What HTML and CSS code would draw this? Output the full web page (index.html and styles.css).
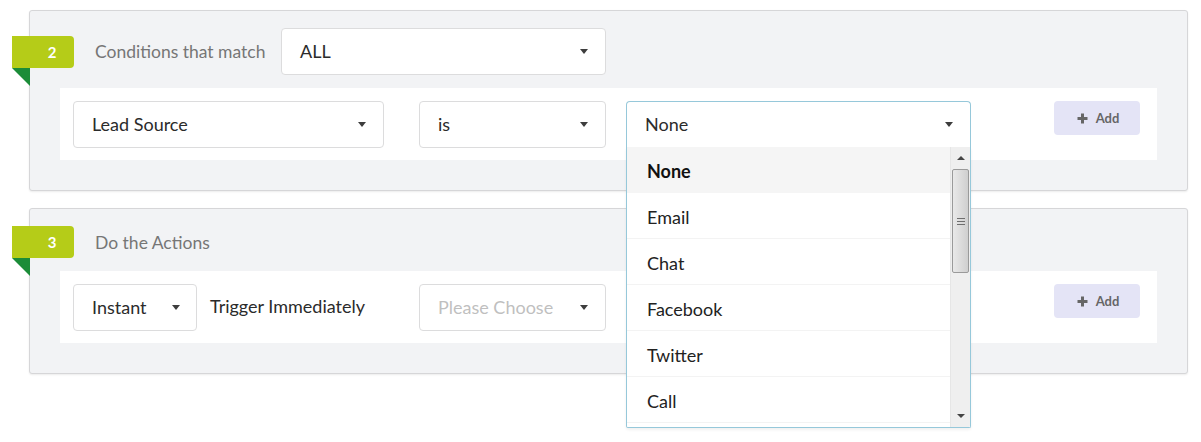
FILE: index.html
```html
<!DOCTYPE html>
<html lang="en">
<head>
<meta charset="utf-8">
<title>Workflow rule</title>
<link rel="stylesheet" href="styles.css">
</head>
<body>
<div class="page">
  <section class="card">
    <div class="card-head">
      <span class="step">2</span>
      <span class="head-label">Conditions that match</span>
      <div class="select select--match"><span class="select-text">ALL</span><span class="caret"></span></div>
    </div>
    <div class="rule-row">
      <div class="cell"><div class="select select--field"><span class="select-text">Lead Source</span><span class="caret"></span></div></div>
      <div class="cell"><div class="select select--op"><span class="select-text">is</span><span class="caret"></span></div></div>
      <div class="cell">
        <div class="select select--value is-open">
          <span class="select-text">None</span><span class="caret"></span>
          <div class="menu">
            <ul class="menu-list">
              <li class="menu-item is-selected">None</li>
              <li class="menu-item">Email</li>
              <li class="menu-item">Chat</li>
              <li class="menu-item">Facebook</li>
              <li class="menu-item">Twitter</li>
              <li class="menu-item">Call</li>
            </ul>
            <div class="scrollbar">
              <div class="sb-btn"><span class="sb-up"></span></div>
              <div class="sb-thumb"><span class="grip"></span><span class="grip"></span><span class="grip"></span></div>
              <div class="sb-track"></div>
              <div class="sb-btn"><span class="sb-down"></span></div>
            </div>
          </div>
        </div>
      </div>
      <div class="cell cell--end">
        <button class="add-btn" type="button"><svg class="plus" width="11" height="11" viewBox="0 0 11 11"><path d="M5.5 0.5v10M0.5 5.5h10" stroke="#666666" stroke-width="3"/></svg>Add</button>
      </div>
    </div>
  </section>

  <section class="card">
    <div class="card-head card-head--plain">
      <span class="step">3</span>
      <span class="head-label">Do the Actions</span>
    </div>
    <div class="rule-row">
      <div class="cell cell--inline">
        <div class="select select--timing"><span class="select-text">Instant</span><span class="caret"></span></div>
        <span class="trigger-text">Trigger Immediately</span>
      </div>
      <div class="cell"><div class="select select--op"><span class="select-text placeholder">Please Choose</span><span class="caret"></span></div></div>
      <div class="cell"></div>
      <div class="cell cell--end">
        <button class="add-btn" type="button"><svg class="plus" width="11" height="11" viewBox="0 0 11 11"><path d="M5.5 0.5v10M0.5 5.5h10" stroke="#666666" stroke-width="3"/></svg>Add</button>
      </div>
    </div>
  </section>
</div>
</body>
</html>
```

FILE: styles.css
```css
* { box-sizing: border-box; }

html, body {
  height: 100%;
}

body {
  margin: 0;
  min-height: 442px;
  background: #ffffff;
  font-family: Lato, "Open Sans", "Liberation Sans", sans-serif;
  color: #333333;
}

.page {
  padding: 10px 0 0 29px;
  width: 1188px;
  display: flex;
  flex-direction: column;
  gap: 17px;
}

.card {
  background: #f2f3f5;
  border: 1px solid #d6d6d8;
  border-radius: 3px;
  box-shadow: 0 1px 2px rgba(0, 0, 0, 0.08);
  padding: 17px 30px 30px 30px;
  display: flex;
  flex-direction: column;
  gap: 13px;
}

.card-head {
  position: relative;
  display: flex;
  align-items: center;
  min-height: 32px;
  padding-left: 35px;
}

.step {
  position: absolute;
  left: -48px;
  top: 50%;
  margin-top: -16px;
  width: 62px;
  height: 32px;
  padding-left: 18px;
  background: #b5cc18;
  border-radius: 0 4px 4px 0;
  color: #ffffff;
  font-weight: 700;
  font-size: 15px;
  display: flex;
  align-items: center;
  justify-content: center;
}

.step::after {
  content: "";
  position: absolute;
  top: 100%;
  left: 0;
  width: 0;
  height: 0;
  border-top: 18px solid #1b8c38;
  border-left: 18px solid transparent;
}

.head-label {
  flex: 0 0 186px;
  font-size: 17.5px;
  color: #767676;
}

.select {
  position: relative;
  height: 47px;
  background: #ffffff;
  border: 1px solid #dcdcdd;
  border-radius: 4px;
  display: flex;
  align-items: center;
  justify-content: space-between;
  padding: 0 18px 1px 18px;
  font-size: 18px;
  color: #2b2b2b;
}

.select-text.placeholder { color: #bfbfbf; }

.caret {
  width: 0;
  height: 0;
  border-left: 4.5px solid transparent;
  border-right: 4.5px solid transparent;
  border-top: 5px solid #3d3d3d;
}

.select--match { width: 325px; padding-right: 17px; }
.select--field { width: 311px; padding-right: 17px; }
.select--op { width: 187px; padding-right: 17px; }
.select--value { width: 345px; padding-right: 17px; }
.select--timing { width: 124px; padding-right: 16px; }

.select.is-open {
  border-color: #96c8da;
  border-bottom-color: transparent;
  border-radius: 4px 4px 0 0;
}

.rule-row {
  background: #ffffff;
  display: grid;
  grid-template-columns: 346px 207px 345px 1fr;
  align-items: start;
  padding: 13px 17px 12px 13px;
}

.cell--inline {
  display: flex;
  align-items: center;
  gap: 13px;
}

.trigger-text {
  font-size: 18px;
  color: #2b2b2b;
  margin-top: -4px;
}

.cell--end { justify-self: end; }

.add-btn {
  width: 86px;
  height: 34px;
  border: none;
  border-radius: 4px;
  background: #e4e4f6;
  font-family: Lato, "Open Sans", "Liberation Sans", sans-serif;
  font-weight: 700;
  font-size: 13px;
  color: #666666;
  display: flex;
  align-items: center;
  justify-content: center;
  gap: 8px;
  padding: 0 0 0 2px;
}

/* open dropdown menu */
.menu {
  position: absolute;
  top: 100%;
  left: -1px;
  width: 345px;
  height: 281px;
  background: #ffffff;
  border: 1px solid #96c8da;
  border-top: none;
  border-radius: 0 0 2px 2px;
  display: flex;
  overflow: hidden;
  z-index: 5;
  box-shadow: 0 2px 3px rgba(0, 0, 0, 0.06);
}

.menu-list {
  list-style: none;
  margin: 0;
  padding: 0;
  flex: 1;
}

.menu-item {
  height: 46px;
  display: flex;
  align-items: center;
  padding-left: 20px;
  padding-top: 2px;
  border-bottom: 1px solid #f3f3f3;
  font-size: 18px;
  color: #222222;
}

.menu-item.is-selected {
  background: #f5f5f5;
  font-weight: 700;
  color: #111111;
  border-bottom-color: #f5f5f5;
}

.scrollbar {
  flex: 0 0 18px;
  background: #efefef;
  border-left: 1px solid #e6e6e6;
  display: flex;
  flex-direction: column;
  align-items: center;
  padding: 0 1px;
}

.sb-btn {
  height: 22px;
  width: 100%;
  display: flex;
  align-items: center;
  justify-content: center;
}

.sb-up {
  width: 0; height: 0;
  border-left: 4px solid transparent;
  border-right: 4px solid transparent;
  border-bottom: 4px solid #444;
}

.sb-down {
  width: 0; height: 0;
  border-left: 4px solid transparent;
  border-right: 4px solid transparent;
  border-top: 4px solid #444;
}

.sb-thumb {
  width: 17px;
  height: 104px;
  border: 1px solid #9a9a9a;
  border-radius: 2px;
  background: linear-gradient(to right, #e9e9e9 0%, #dcdcdc 50%, #cfcfcf 100%);
  display: flex;
  flex-direction: column;
  align-items: center;
  justify-content: center;
  gap: 2px;
}

.grip {
  width: 8px;
  height: 1px;
  background: #6e6e6e;
}

.sb-track { flex: 1; }
```
